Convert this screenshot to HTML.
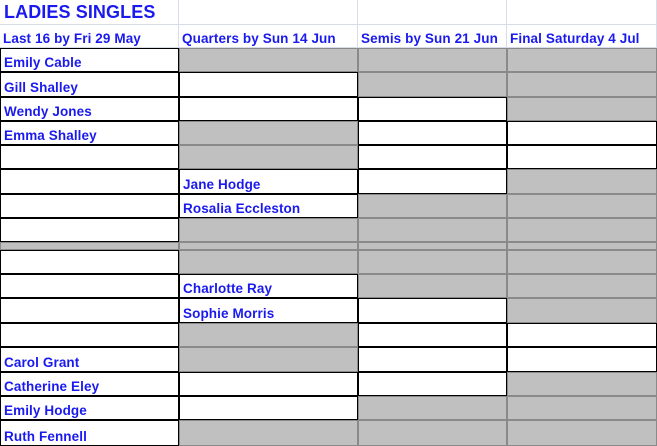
<!DOCTYPE html>
<html><head><style>
body{margin:0;width:657px;height:446px;background:#fff;position:relative;overflow:hidden;font-family:"Liberation Sans",Arial,sans-serif;}
.c{position:absolute;box-sizing:border-box;font-weight:bold;color:#1a1aee;font-size:13.5px;padding-left:3px;display:flex;align-items:flex-end;padding-bottom:1px;white-space:nowrap;letter-spacing:0.1px}
.h{border-right:1px solid #d8dce8;border-bottom:1px solid #d8dce8}
.g{background:#c0c0c0;border:1px solid #8a8a8a}
.w{background:#fff;border:1.5px solid #000}
</style></head><body>
<div id="r"></div>
<script>
var X=[0,179,358,507,657];
var Y=[48,72,97,121,145,169,194,218,242,250,274,298,323,347,372,396,420,446];
var rows=[
["Emily Cable","g","g","g"],
["Gill Shalley","w","g","g"],
["Wendy Jones","w","w","g"],
["Emma Shalley","g","w","w"],
["","g","w","w"],
["","w:Jane Hodge","w","g"],
["","w:Rosalia Eccleston","g","g"],
["","g","g","g"],
["G","g","g","g"],
["","g","g","g"],
["","w:Charlotte Ray","g","g"],
["","w:Sophie Morris","w","g"],
["","g","w","w"],
["Carol Grant","g","w","w"],
["Catherine Eley","w","w","g"],
["Emily Hodge","w","g","g"],
["Ruth Fennell","g","g","g"]];
var h='';
function cell(x,y,w,hh,cls,t,st){h+='<div class="c '+cls+'" style="left:'+x+'px;top:'+y+'px;width:'+w+'px;height:'+hh+'px;'+(st||'')+'">'+t+'</div>';}
cell(0,0,179,25,'h','LADIES SINGLES','font-size:18px;padding-bottom:1px;padding-left:4px');
cell(179,0,179,25,'h','');cell(358,0,149,25,'h','');cell(507,0,150,25,'h','');
var hd=['Last 16 by Fri 29 May','Quarters by Sun 14 Jun','Semis by Sun 21 Jun','Final Saturday 4 Jul'];
for(var i=0;i<4;i++)cell(X[i],25,X[i+1]-X[i],23,'h',hd[i]);
for(var r=0;r<rows.length;r++){
 var y=Y[r],hh=Y[r+1]-Y[r];
 for(var c=0;c<4;c++){
  var v=rows[r][c],cls,t='';
  if(c==0){ if(v=="G"){cls='g';}else{cls='w';t=v;} }
  else{var p=v.split(':');cls=p[0];t=p[1]||'';}
  cell(X[c],y,X[c+1]-X[c],hh,cls,t);
 }
}
document.getElementById('r').innerHTML=h;
</script>
</body></html>
